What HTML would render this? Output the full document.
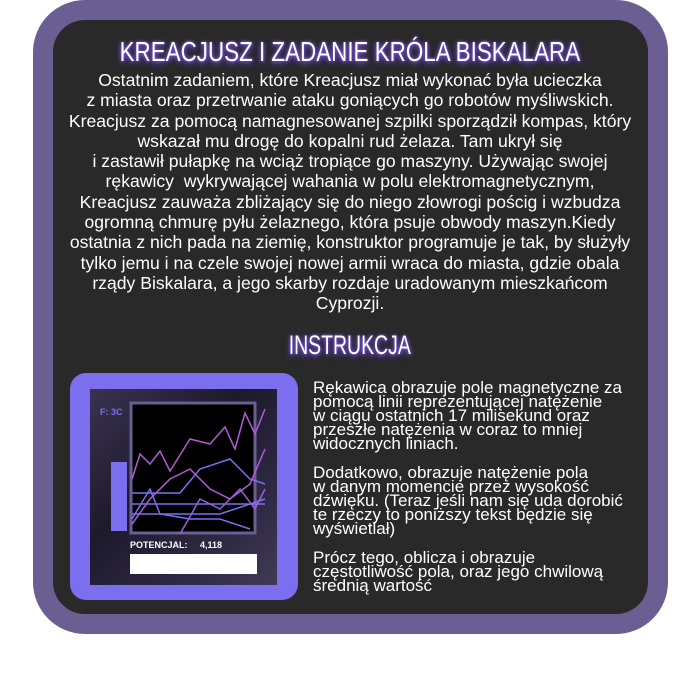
<!DOCTYPE html>
<html><head><meta charset="utf-8"><style>
html,body{margin:0;padding:0;background:#fff;width:700px;height:700px;overflow:hidden;font-family:"Liberation Sans",sans-serif}
.outer{position:absolute;left:33px;top:0;width:635px;height:634px;background:#6b5e93;border-radius:52px}
.inner{position:absolute;left:53px;top:20px;width:595px;height:594px;background:#292929;border-radius:32px}
.title{position:absolute;left:0;width:700px;text-align:center;color:#fff;white-space:nowrap;text-shadow:0 0 4px #8a5cff,0 2px 6px #7a4cff}
.title span{display:inline-block}
.body{position:absolute;left:50px;top:70px;width:600px;text-align:center;color:#fff;font-size:17.6px;line-height:20.3px}
.right{position:absolute;left:313px;top:381px;width:330px;color:#fff;font-size:17px;line-height:14px}
.right p{margin:0 0 15px}
.box{position:absolute;left:70px;top:373px;width:228px;height:227px;background:#7b6ff0;border-radius:16px}
.photo{position:absolute;left:90px;top:389px;width:187px;height:196px;background:linear-gradient(135deg,#3a3350,#1e1a2c 40%,#2c2740 70%,#403a55)}
</style></head><body>
<div class="outer"></div><div class="inner"></div>
<div class="title" style="top:36px;font-size:28px"><span style="transform:scaleX(0.8)">KREACJUSZ I ZADANIE KRÓLA BISKALARA</span></div>
<div class="body">Ostatnim zadaniem, które Kreacjusz miał wykonać była ucieczka<br>z miasta oraz przetrwanie ataku goniących go robotów myśliwskich.<br>Kreacjusz za pomocą namagnesowanej szpilki sporządził kompas, który<br>wskazał mu drogę do kopalni rud żelaza. Tam ukrył się<br>i zastawił pułapkę na wciąż tropiące go maszyny. Używając swojej<br>rękawicy&nbsp; wykrywającej wahania w polu elektromagnetycznym,<br>Kreacjusz zauważa zbliżający się do niego złowrogi pościg i wzbudza<br>ogromną chmurę pyłu żelaznego, która psuje obwody maszyn.Kiedy<br>ostatnia z nich pada na ziemię, konstruktor programuje je tak, by służyły<br>tylko jemu i na czele swojej nowej armii wraca do miasta, gdzie obala<br>rządy Biskalara, a jego skarby rozdaje uradowanym mieszkańcom<br>Cyprozji.</div>
<div class="title" style="top:330px;font-size:27px"><span style="transform:scaleX(0.72)">INSTRUKCJA</span></div>
<div class="box"></div>
<div class="photo"></div>
<svg style="position:absolute;left:90px;top:389px" width="187" height="196">
<text x="10" y="26" fill="#7b6ff0" font-size="9" font-weight="bold" font-family="Liberation Sans">F: 3C</text>
<rect x="41" y="14" width="124" height="130" fill="#000" stroke="#6b5e93" stroke-width="3"/>
<rect x="21" y="73" width="16" height="69" fill="#7b6ff0"/>
<g fill="none" stroke-width="1.5">
<polyline stroke="#b35ad6" points="42,90 50,65 60,75 70,62 80,82 100,50 120,55 135,38 145,60 155,24 165,45 175,20"/>
<polyline stroke="#7b6ff0" points="42,104 60,104 90,104 110,80 140,70 160,90 175,95"/>
<polyline stroke="#b35ad6" points="42,135 60,110 80,90 100,80 120,100 140,110 160,95 175,60"/>
<polyline stroke="#7b6ff0" points="42,115 80,115 120,115 160,115 175,115"/>
<polyline stroke="#7b6ff0" points="42,125 80,125 130,125 175,110"/>
<polyline stroke="#9a5fd8" points="90,145 110,110 130,120 150,100 165,120 175,100"/>
<polyline stroke="#7b6ff0" points="42,130 60,100 70,125 100,130 130,130 160,140"/>
</g>
<text x="40" y="159" fill="#fff" font-size="9" font-weight="bold" font-family="Liberation Sans">POTENCJAL:&#160;&#160;&#160;&#160; 4,118</text>
<rect x="40" y="165" width="127" height="20" fill="#fff"/>
</svg>
<div class="right"><p>Rękawica obrazuje pole magnetyczne za<br>pomocą linii reprezentującej natężenie<br>w ciągu ostatnich 17 milisekund oraz<br>przeszłe natężenia w coraz to mniej<br>widocznych liniach.</p><p>Dodatkowo, obrazuje natężenie pola<br>w danym momencie przez wysokość<br>dźwięku. (Teraz jeśli nam się uda dorobić<br>te rzeczy to poniższy tekst będzie się<br>wyświetlał)</p><p>Prócz tego, oblicza i obrazuje<br>częstotliwość pola, oraz jego chwilową<br>średnią wartość</p></div>
</body></html>
